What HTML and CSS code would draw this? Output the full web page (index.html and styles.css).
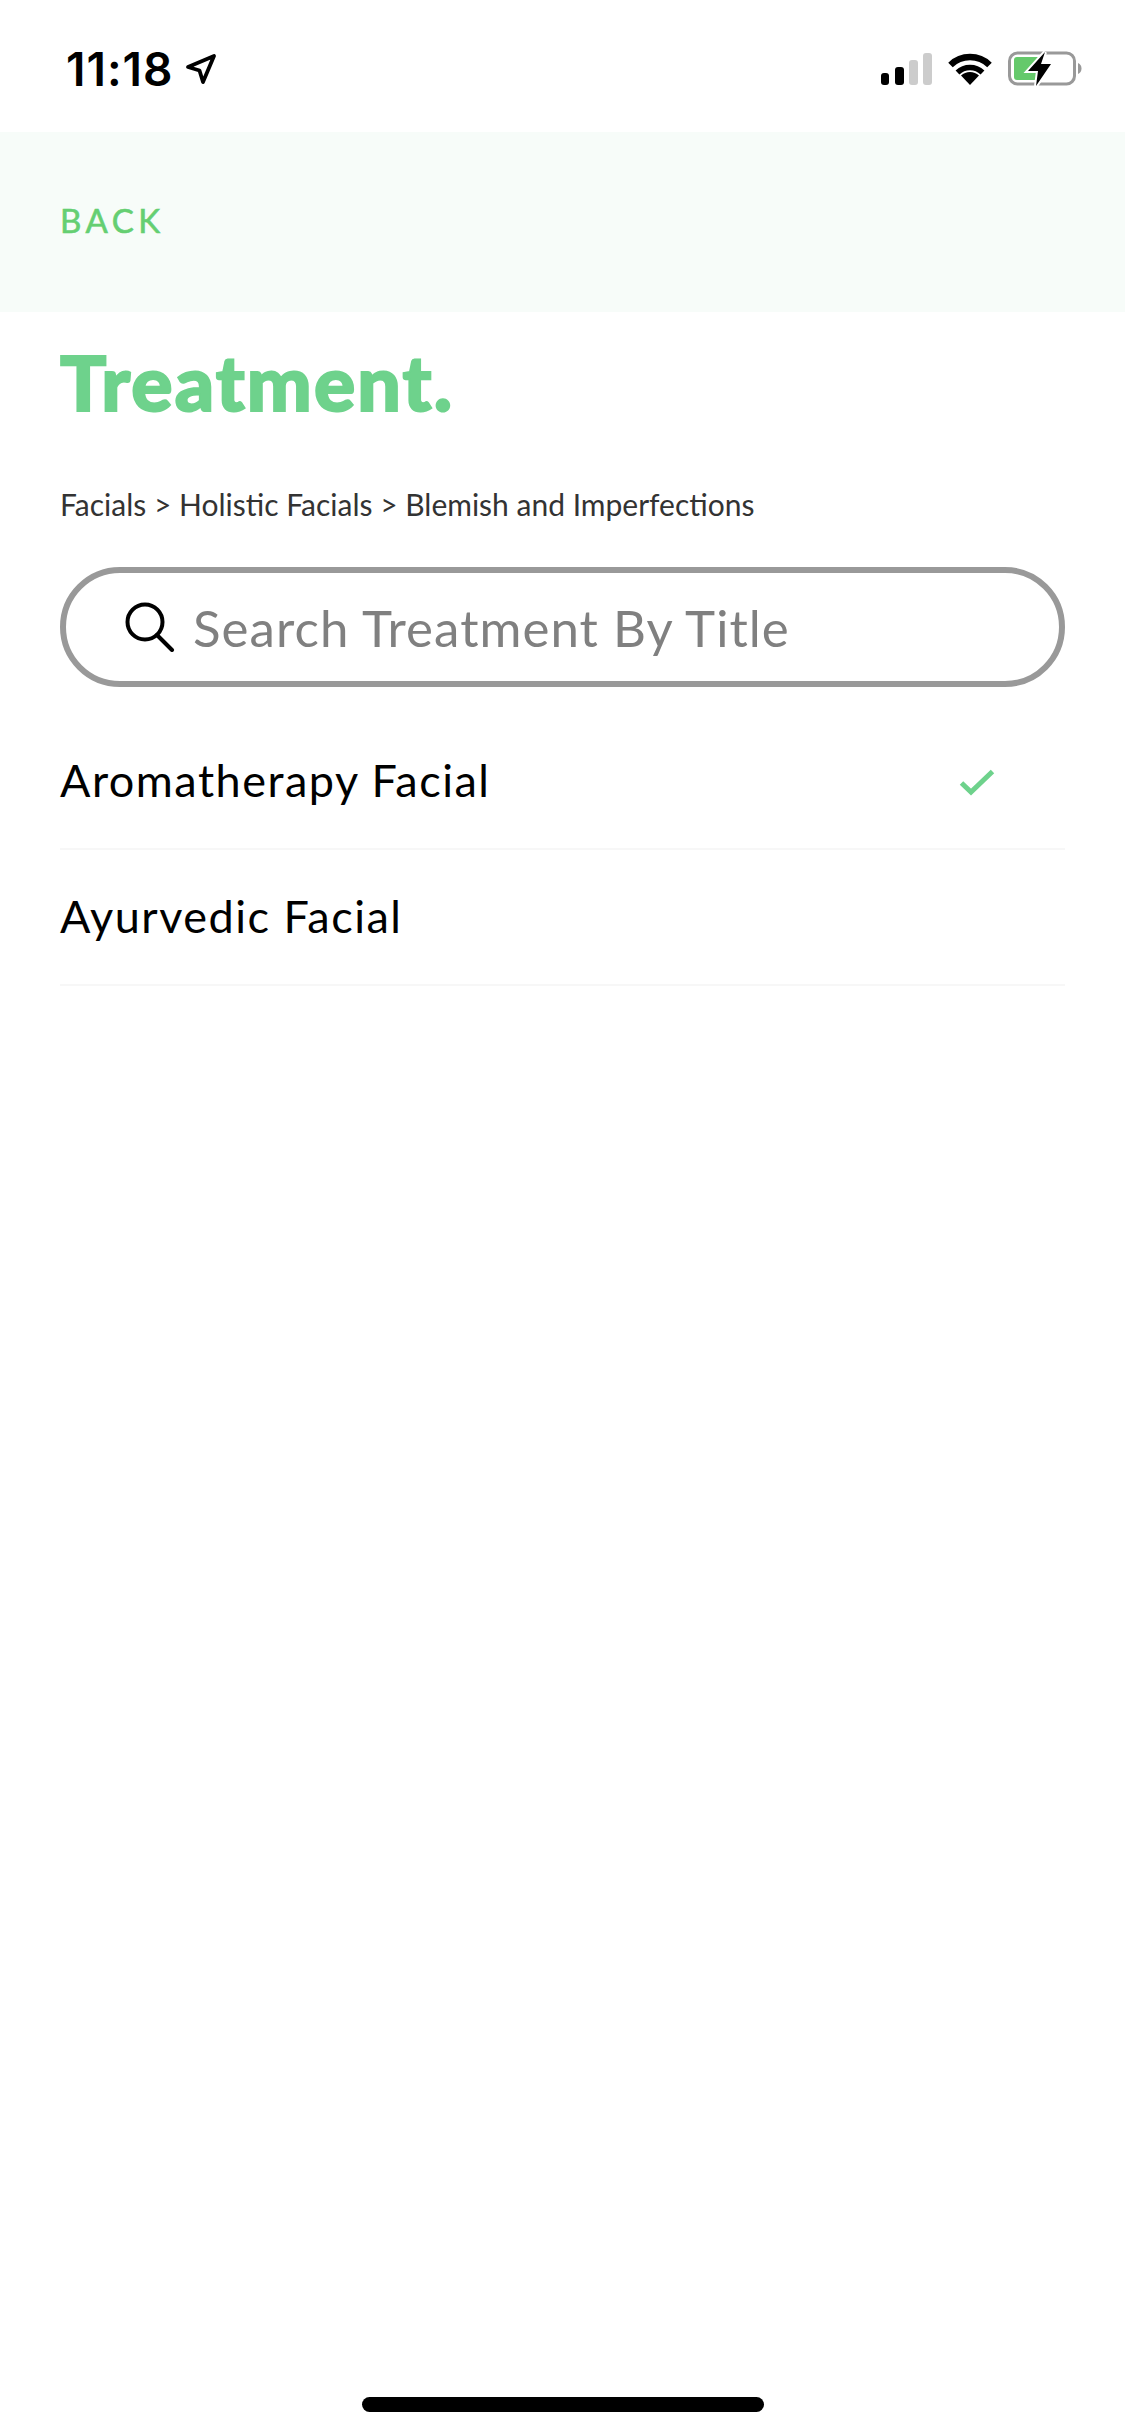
FILE: index.html
```html
<!DOCTYPE html>
<html lang="en">
<head>
  <meta charset="UTF-8">
  <meta name="viewport" content="width=device-width, initial-scale=1.0">
  <title>Treatment</title>
  <link rel="stylesheet" href="styles.css">
</head>
<body>
  <div class="screen">
    <div class="status-bar">
      <div class="status-left">
        <span class="time">11:18</span>
        <svg class="location" width="32" height="32" viewBox="0 0 32 32">
          <path d="M3 14 L29 3 L18 29 L14.5 17.5 Z" fill="none" stroke="#000" stroke-width="3.8" stroke-linejoin="round"/>
        </svg>
      </div>
      <div class="status-right">
        <svg class="signal" width="51" height="32" viewBox="0 0 51 32">
          <rect x="0" y="20" width="8" height="12" rx="3" fill="#000"/>
          <rect x="14" y="14" width="9" height="18" rx="3" fill="#000"/>
          <rect x="28" y="7" width="9" height="25" rx="3" fill="#ccc"/>
          <rect x="42" y="0" width="9" height="32" rx="3" fill="#ccc"/>
        </svg>
        <svg class="wifi" width="46" height="34" viewBox="0 0 46 34">
          <path d="M23 33 L14 23.5 A13 13 0 0 1 32 23.5 Z" fill="#000"/>
          <path d="M3.5 13 A28 28 0 0 1 42.5 13" fill="none" stroke="#000" stroke-width="6.5"/>
          <path d="M10.5 20.5 A18 18 0 0 1 35.5 20.5" fill="none" stroke="#000" stroke-width="5.5"/>
        </svg>
        <svg class="battery" width="74" height="36" viewBox="0 0 74 36">
          <rect x="1.5" y="2" width="65" height="31" rx="8" fill="none" stroke="#999" stroke-width="3"/>
          <rect x="6" y="6" width="27" height="23" rx="3" fill="#65c96b"/>
          <path d="M70 12 C72.500 13 73.500 15 73.500 17.500 C73.500 20 72.500 22 70 23 Z" fill="#999"/>
          <path d="M37 1 L20 20 H30 L28 35 L43 13 H33 Z" fill="#000" stroke="#fff" stroke-width="4" paint-order="stroke"/>
        </svg>
      </div>
    </div>

    <div class="top-band">
      <a class="back">BACK</a>
    </div>

    <div class="content">
      <h1 class="page-title">Treatment.</h1>
      <p class="crumbs">Facials &gt; Holistic Facials &gt; Blemish and Imperfections</p>

      <div class="search">
        <svg class="search-icon" width="50" height="50" viewBox="0 0 50 50">
          <circle cx="20" cy="20" r="17.500" fill="none" stroke="#000" stroke-width="4"/>
          <path d="M32 33 L47 48" fill="none" stroke="#000" stroke-width="4" stroke-linecap="round"/>
        </svg>
        <span class="search-text">Search Treatment By Title</span>
      </div>

      <ul class="treatments">
        <li class="treatment">
          <span>Aromatherapy Facial</span>
          <svg class="check" width="36" height="28" viewBox="0 0 36 28">
            <path d="M2.500 14 L12 23 L33.500 2.500" fill="none" stroke="#6ed28c" stroke-width="5"/>
          </svg>
        </li>
        <li class="treatment">
          <span>Ayurvedic Facial</span>
        </li>
      </ul>
    </div>

    <div class="home-bar"></div>
  </div>
</body>
</html>
```

FILE: styles.css
```css
* {
  box-sizing: border-box;
}
body {
  margin: 0;
  padding: 0;
  background-color: #fff;
  font-family: Lato, "Open Sans", sans-serif;
}
.screen {
  display: flex;
  flex-direction: column;
  width: 1125px;
  height: 2436px;
}
.status-bar {
  display: flex;
  justify-content: space-between;
  align-items: center;
  height: 132px;
  padding: 5px 43px 0 66px;
}
.status-left {
  display: flex;
  align-items: center;
  gap: 12px;
}
.time {
  font-family: Inter, sans-serif;
  font-size: 46px;
  font-weight: 600;
  letter-spacing: 1px;
  color: #000;
}
.status-right {
  display: flex;
  align-items: center;
  gap: 15px;
}
.top-band {
  display: flex;
  align-items: center;
  height: 180px;
  padding: 0 60px 4px;
  background-color: #f7fcf9;
}
.back {
  font-size: 33px;
  letter-spacing: 4.500px;
  -webkit-text-stroke: 0.600px #65cf72;
  color: #65cf72;
}
.content {
  flex: 1;
  padding: 0 60px;
}
.page-title {
  margin: 24px 0 0;
  font-family: "Lato Black", Lato, sans-serif;
  font-size: 77px;
  line-height: 90px;
  font-weight: 900;
  letter-spacing: 2.100px;
  -webkit-text-stroke: 2px #6ed28c;
  color: #6ed28c;
}
.crumbs {
  margin: 60px 0 0;
  font-size: 30px;
  line-height: 36px;
  color: #333;
}
.search {
  display: flex;
  align-items: center;
  gap: 18px;
  height: 120px;
  margin-top: 45px;
  padding-left: 59px;
  border: 6px solid #999;
  border-radius: 60px;
}
.search-text {
  font-size: 51px;
  letter-spacing: 1.050px;
  color: #808080;
}
.treatments {
  margin: 27px 0 0;
  padding: 0;
  list-style: none;
}
.treatment {
  display: flex;
  justify-content: space-between;
  align-items: center;
  height: 136px;
  padding: 0 70px 3px 0;
  border-bottom: 2px solid #f7f7f7;
  font-size: 45px;
  letter-spacing: 1.500px;
  color: #000;
}
.check {
  margin-top: 7px;
}
.home-bar {
  align-self: center;
  flex-shrink: 0;
  width: 402px;
  height: 15px;
  margin-bottom: 24px;
  border-radius: 8px;
  background-color: #000;
}
```
